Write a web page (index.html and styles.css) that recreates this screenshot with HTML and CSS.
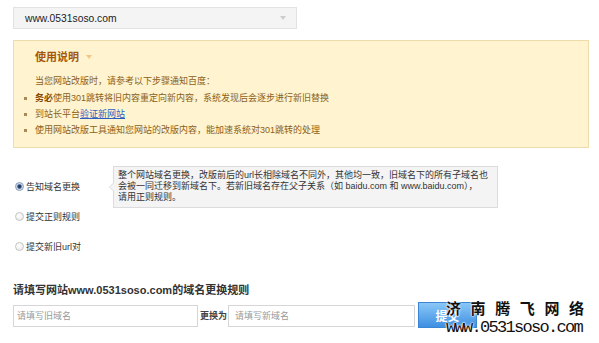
FILE: index.html
```html
<!DOCTYPE html>
<html lang="zh-CN">
<head>
<meta charset="utf-8">
<title>网站改版</title>
<link rel="stylesheet" href="styles.css">
</head>
<body>
<div class="page">
  <div class="select">
    <span class="select-text">www.0531soso.com</span>
    <span class="select-arrow"></span>
  </div>

  <div class="notice">
    <div class="notice-title">使用说明<span class="caret"></span></div>
    <p class="notice-intro">当您网站改版时，请参考以下步骤通知百度：</p>
    <ul class="notice-list">
      <li><span><b>务必</b>使用301跳转将旧内容重定向新内容，系统发现后会逐步进行新旧替换</span></li>
      <li><span>到站长平台<a href="#">验证新网站</a></span></li>
      <li><span>使用网站改版工具通知您网站的改版内容，能加速系统对301跳转的处理</span></li>
    </ul>
  </div>

  <div class="options">
    <div class="option">
      <span class="radio checked"></span>告知域名更换
      <div class="tip">整个网站域名更换，改版前后的url长相除域名不同外，其他均一致，旧域名下的所有子域名也<br>会被一同迁移到新域名下。若新旧域名存在父子关系（如 baidu.com 和 www.baidu.com），<br>请用正则规则。</div>
    </div>
    <div class="option"><span class="radio"></span>提交正则规则</div>
    <div class="option"><span class="radio"></span>提交新旧url对</div>
  </div>

  <h3 class="rule-title">请填写网站www.0531soso.com的域名更换规则</h3>
  <div class="rule-row">
    <input class="field field-old" type="text" placeholder="请填写旧域名">
    <span class="to">更换为</span>
    <input class="field field-new" type="text" placeholder="请填写新域名">
    <button class="submit" type="button">提交</button>
  </div>
</div>

<div class="watermark">
  <div class="wm-name">济南腾飞网络</div>
  <div class="wm-url">www.0531soso.com</div>
</div>
</body>
</html>
```

FILE: styles.css
```css
* { box-sizing: border-box; }

html, body {
  margin: 0;
  background: #fff;
}

body {
  font-family: "Liberation Sans", "Noto Sans CJK SC", sans-serif;
  color: #333;
  position: relative;
  width: 599px;
  height: 343px;
  overflow: hidden;
}

.page {
  padding: 7px 0 0 13px;
}

/* dropdown */
.select {
  width: 284px;
  height: 22px;
  border: 1px solid #e2e2e2;
  background: #f4f4f4;
  display: flex;
  align-items: center;
  justify-content: space-between;
  padding: 0 10px 0 11px;
}

.select-text {
  font-size: 10.3px;
  color: #222;
}

.select-arrow {
  width: 0;
  height: 0;
  border-left: 3.5px solid transparent;
  border-right: 3.5px solid transparent;
  border-top: 4px solid #cdcdcd;
}

/* notice box */
.notice {
  margin-top: 11px;
  width: 576px;
  border: 1px solid #eedcaa;
  background: #fff4cf;
  padding: 9px 0 9px 21px;
  color: #8b6020;
  font-size: 9px;
}

.notice-title {
  font-size: 11px;
  font-weight: bold;
  color: #a5570c;
  line-height: 14px;
  display: flex;
  align-items: center;
  gap: 7px;
}

.caret {
  width: 0;
  height: 0;
  border-left: 3px solid transparent;
  border-right: 3px solid transparent;
  border-top: 4px solid #f3c688;
}

.notice-intro {
  margin: 9px 0 1px;
  line-height: 16px;
}

.notice-list {
  list-style: none;
  margin: 0;
  padding: 0;
  line-height: 16px;
}

.notice-list li {
  display: flex;
  align-items: center;
}

.notice-list li::before {
  content: "";
  width: 3px;
  height: 3px;
  background: #a88a5a;
  margin-left: -11px;
  margin-right: 8px;
  flex: none;
}

.notice-list b {
  color: #8a4a00;
}

.notice-list a {
  color: #2a5fc0;
  text-decoration: underline;
}

/* options */
.options {
  margin-top: 23px;
}

.option {
  position: relative;
  height: 30px;
  display: flex;
  align-items: center;
  font-size: 9px;
  color: #333;
}

.radio {
  width: 9px;
  height: 9px;
  border-radius: 50%;
  margin: 0 2px 0 2px;
  border: 1px solid #c4c4c4;
  background: radial-gradient(circle at 40% 35%, #ffffff, #e6e6e6);
  flex: none;
}

.radio.checked {
  border-color: #8a9bb3;
  background: radial-gradient(circle, #1e3158 0, #2c4675 1.6px, #b9cbe4 2.6px, #eef3fa 4px);
}

.tip {
  position: absolute;
  left: 100px;
  top: -5px;
  width: 385px;
  height: 42px;
  padding: 3px 4px;
  border: 1px solid #dcdcdc;
  background: #f4f4f4;
  font-size: 9px;
  line-height: 11px;
  color: #333;
  white-space: nowrap;
}

.tip::before,
.tip::after {
  content: "";
  position: absolute;
  top: 16px;
  width: 0;
  height: 0;
  border-top: 4px solid transparent;
  border-bottom: 4px solid transparent;
}

.tip::before {
  left: -5px;
  border-right: 4px solid #dcdcdc;
}

.tip::after {
  left: -4px;
  border-right: 4px solid #f4f4f4;
}

/* rule form */
.rule-title {
  margin: 22px 0 0;
  font-size: 11px;
  font-weight: bold;
  line-height: 14px;
  color: #333;
}

.rule-row {
  margin-top: 5px;
  display: flex;
  align-items: flex-end;
}

.field {
  height: 22px;
  margin: 0 0 1px;
  border: 1px solid #d6d6d6;
  background: #fff;
  font-family: "Liberation Sans", "Noto Sans CJK SC", sans-serif;
  font-size: 9px;
  color: #333;
  outline: none;
}

.field::placeholder {
  color: #9a9a9a;
}

.field-old {
  width: 185px;
  padding: 0 3px;
}

.field-new {
  width: 187px;
  padding: 0 6px;
}

.to {
  align-self: center;
  font-size: 9px;
  font-weight: bold;
  color: #444;
  margin: 0 1px 0 2px;
}

.submit {
  margin-left: 3px;
  width: 59px;
  height: 26px;
  border: 1px solid #3b86d4;
  background: linear-gradient(#8ac7f7, #3f90e2);
  color: #fff;
  font-family: "Liberation Sans", "Noto Sans CJK SC", sans-serif;
  font-size: 12px;
  font-weight: bold;
  padding: 0;
}

/* watermark overlay */
.watermark {
  position: absolute;
  left: 446px;
  top: 297px;
  color: #111;
  text-shadow: 0 0 1px #fff, 0 0 2px #fff, 0 0 2px #fff;
}

.wm-name {
  font-family: "Noto Sans CJK SC", sans-serif;
  font-size: 15px;
  font-weight: bold;
  letter-spacing: 9.6px;
  line-height: 22px;
  white-space: nowrap;
}

.wm-url {
  font-family: "Liberation Mono", monospace;
  font-size: 17px;
  letter-spacing: -1.7px;
  line-height: 17px;
  white-space: nowrap;
}
```
